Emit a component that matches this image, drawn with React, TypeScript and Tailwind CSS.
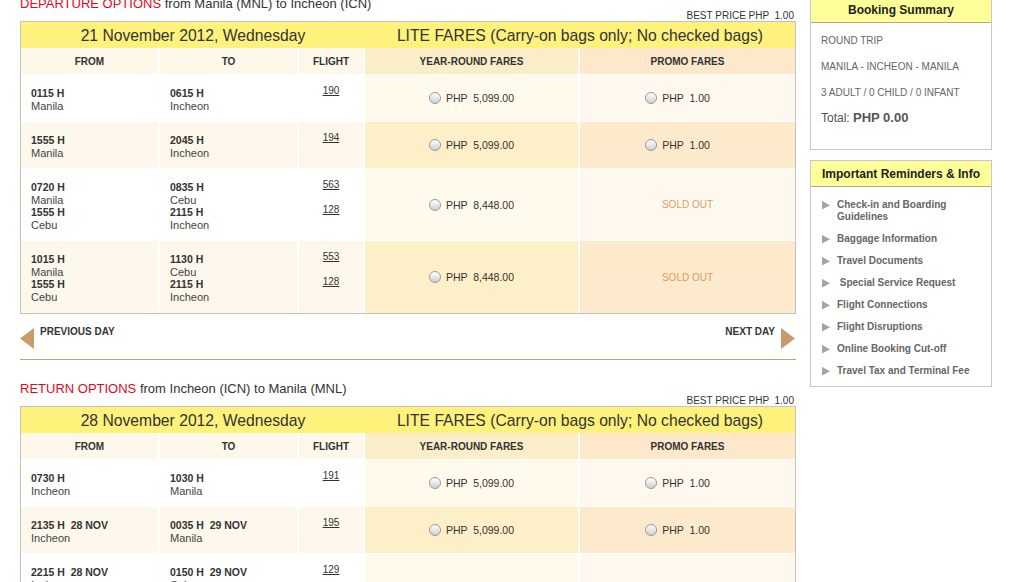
import React from "react";

type Leg = { from: [string, string]; to: [string, string]; flight: string };
type Row = { legs: Leg[]; yr: string; promo: string | null; h: number; cream: boolean };

const depRows: Row[] = [
  { legs: [{ from: ["0115 H", "Manila"], to: ["0615 H", "Incheon"], flight: "190" }], yr: "5,099.00", promo: "1.00", h: 46, cream: false },
  { legs: [{ from: ["1555 H", "Manila"], to: ["2045 H", "Incheon"], flight: "194" }], yr: "5,099.00", promo: "1.00", h: 46, cream: true },
  {
    legs: [
      { from: ["0720 H", "Manila"], to: ["0835 H", "Cebu"], flight: "563" },
      { from: ["1555 H", "Cebu"], to: ["2115 H", "Incheon"], flight: "128" },
    ],
    yr: "8,448.00",
    promo: null,
    h: 71,
    cream: false,
  },
  {
    legs: [
      { from: ["1015 H", "Manila"], to: ["1130 H", "Cebu"], flight: "553" },
      { from: ["1555 H", "Cebu"], to: ["2115 H", "Incheon"], flight: "128" },
    ],
    yr: "8,448.00",
    promo: null,
    h: 72,
    cream: true,
  },
];

const retRows: Row[] = [
  { legs: [{ from: ["0730 H", "Incheon"], to: ["1030 H", "Manila"], flight: "191" }], yr: "5,099.00", promo: "1.00", h: 46, cream: false },
  { legs: [{ from: ["2135 H  28 NOV", "Incheon"], to: ["0035 H  29 NOV", "Manila"], flight: "195" }], yr: "5,099.00", promo: "1.00", h: 46, cream: true },
  {
    legs: [
      { from: ["2215 H  28 NOV", "Incheon"], to: ["0150 H  29 NOV", "Cebu"], flight: "129" },
      { from: ["0720 H  29 NOV", "Cebu"], to: ["0835 H  29 NOV", "Manila"], flight: "561" },
    ],
    yr: "8,448.00",
    promo: "1.00",
    h: 72,
    cream: false,
  },
];

function Radio() {
  return (
    <span className="inline-block w-[12px] h-[12px] rounded-full border border-[#979797] bg-linear-to-b from-[#ffffff] to-[#cfcfcf] shadow-[inset_0_1px_1px_rgba(255,255,255,0.9)]" />
  );
}

function Price({ v, promo }: { v: string; promo?: boolean }) {
  return (
    <div className={`flex items-center gap-[5px] ${promo ? "mr-[20px]" : ""}`}>
      <Radio />
      <span className="text-[10.5px] text-[#333] whitespace-pre leading-[12px]">{`PHP  ${v}`}</span>
    </div>
  );
}

function Place({ legs, side }: { legs: Leg[]; side: "from" | "to" }) {
  return (
    <div className="pl-[10px] pt-[12px] leading-[12.5px]">
      {legs.map((l, i) => (
        <div key={i}>
          <div className="text-[10.5px] font-bold text-[#333] whitespace-pre">{l[side][0]}</div>
          <div className="text-[11px] text-[#444]">{l[side][1]}</div>
        </div>
      ))}
    </div>
  );
}

function FareTable({ date, rows }: { date: string; rows: Row[] }) {
  return (
    <div className="w-[776px] border border-[#c6c1bb] bg-white">
      <div className="flex h-[26px] bg-[#fff27c] text-[15.7px] leading-[28px] text-[#333]">
        <div className="w-[344px] text-center">{date}</div>
        <div className="w-[430px] text-center">LITE FARES (Carry-on bags only; No checked bags)</div>
      </div>
      <div className="grid grid-cols-[137px_137px_64px_213px_215px] gap-x-[2px] gap-y-[1px] bg-white">
        <div className="h-[26px] flex items-center justify-center bg-[#fdf8ea] text-[10px] font-bold text-[#333]">FROM</div>
        <div className="h-[26px] flex items-center justify-center bg-[#fdf8ea] text-[10px] font-bold text-[#333]">TO</div>
        <div className="h-[26px] flex items-center justify-center bg-[#fdf8ea] text-[10px] font-bold text-[#333]">FLIGHT</div>
        <div className="h-[26px] flex items-center justify-center bg-[#fcedc9] text-[10px] font-bold text-[#333]">YEAR-ROUND FARES</div>
        <div className="h-[26px] flex items-center justify-center bg-[#fde8cc] text-[10px] font-bold text-[#333]">PROMO FARES</div>
        {rows.map((r, i) => {
          const left = r.cream ? "bg-[#fdf8eb]" : "bg-[#ffffff]";
          const yr = r.cream ? "bg-[#fdefc8]" : "bg-[#fffaec]";
          const pr = r.cream ? "bg-[#fde9cc]" : "bg-[#fff8ee]";
          return (
            <React.Fragment key={i}>
              <div className={left} style={{ height: r.h }}>
                <Place legs={r.legs} side="from" />
              </div>
              <div className={left} style={{ height: r.h }}>
                <Place legs={r.legs} side="to" />
              </div>
              <div className={`${left} flex flex-col items-center pt-[10px] gap-[13px]`} style={{ height: r.h }}>
                {r.legs.map((l, j) => (
                  <span key={j} className="text-[10px] leading-[12px] underline text-[#333]">
                    {l.flight}
                  </span>
                ))}
              </div>
              <div className={`${yr} flex items-center justify-center`} style={{ height: r.h }}>
                <Price v={r.yr} />
              </div>
              <div className={`${pr} flex items-center justify-center`} style={{ height: r.h }}>
                {r.promo ? (
                  <Price v={r.promo} promo />
                ) : (
                  <span className="text-[10px] text-[#d69f63]">SOLD OUT</span>
                )}
              </div>
            </React.Fragment>
          );
        })}
      </div>
    </div>
  );
}

function Heading({ red, rest }: { red: string; rest: string }) {
  return (
    <>
      <div className="text-[13px] leading-[15px] h-[15px] text-[#333]">
        <span className="text-[#e2081c]">{red}</span> {rest}
      </div>
      <div className="text-[10px] leading-[10px] h-[10px] text-right pr-[2px] text-[#333] whitespace-pre">
        {"BEST PRICE PHP  1.00"}
      </div>
    </>
  );
}

const reminders = [
  ["Check-in and Boarding", "Guidelines"],
  ["Baggage Information"],
  ["Travel Documents"],
  [" Special Service Request"],
  ["Flight Connections"],
  ["Flight Disruptions"],
  ["Online Booking Cut-off"],
  ["Travel Tax and Terminal Fee"],
];

export default function App() {
  return (
    <div className="h-screen w-full overflow-hidden bg-white font-['Liberation_Sans',Arial,sans-serif]">
      <div className="flex gap-[14px] pl-[20px] -mt-[4px]">
        <div className="w-[776px] flex flex-col">
          <Heading red="DEPARTURE OPTIONS" rest="from Manila (MNL) to Incheon (ICN)" />
          <FareTable date="21 November 2012, Wednesday" rows={depRows} />
          <div className="mt-[14px] flex justify-between h-[21px]">
            <div className="flex items-start gap-[6px]">
              <svg width="14" height="21" viewBox="0 0 14 21">
                <polygon points="14,0 14,21 0,10.5" fill="#c99b6b" />
              </svg>
              <span className="text-[10px] font-bold text-[#333] leading-[12px] -mt-[2px]">PREVIOUS DAY</span>
            </div>
            <div className="flex items-start gap-[6px] pr-[1px]">
              <span className="text-[10px] font-bold text-[#333] leading-[12px] -mt-[2px]">NEXT DAY</span>
              <svg width="14" height="21" viewBox="0 0 14 21">
                <polygon points="0,0 14,10.5 0,21" fill="#c99b6b" />
              </svg>
            </div>
          </div>
          <div className="mt-[10px] h-[1px] bg-[#c6a077]" />
          <div className="mt-[21px] flex flex-col">
            <Heading red="RETURN OPTIONS" rest="from Incheon (ICN) to Manila (MNL)" />
            <FareTable date="28 November 2012, Wednesday" rows={retRows} />
          </div>
        </div>
        <div className="w-[182px] flex flex-col gap-[10px]">
          <div className="border border-[#c8c8c8]">
            <div className="h-[26px] bg-[#ffff99] border-b border-[#b3a78f] flex items-center justify-center text-[12px] font-bold text-[#222]">
              Booking Summary
            </div>
            <div className="pl-[10px] pt-[12px] pb-[23px] flex flex-col gap-[14px] text-[10px] leading-[12px] text-[#666]">
              <div>ROUND TRIP</div>
              <div>MANILA - INCHEON - MANILA</div>
              <div>3 ADULT / 0 CHILD / 0 INFANT</div>
              <div className="-mt-[3px] text-[12px] leading-[16px] text-[#555]">
                Total: <span className="text-[13px] font-bold">PHP 0.00</span>
              </div>
            </div>
          </div>
          <div className="border border-[#c8c8c8]">
            <div className="h-[26px] bg-[#ffff99] border-b border-[#b3a78f] flex items-center justify-center text-[12px] font-bold text-[#222]">
              Important Reminders &amp; Info
            </div>
            <div className="pl-[11px] pt-[12px] pb-[9px] flex flex-col gap-[10px]">
              {reminders.map((r, i) => (
                <div key={i} className="flex items-start gap-[6px]">
                  <svg width="9" height="12" viewBox="0 0 9 12" className="shrink-0">
                    <polygon points="0,2 8,6.2 0,10.4" fill="#a3a3a3" />
                  </svg>
                  <div className="text-[10px] font-bold leading-[12px] text-[#666] whitespace-pre">
                    {r.map((t, j) => (
                      <div key={j}>{t}</div>
                    ))}
                  </div>
                </div>
              ))}
            </div>
          </div>
        </div>
      </div>
    </div>
  );
}
